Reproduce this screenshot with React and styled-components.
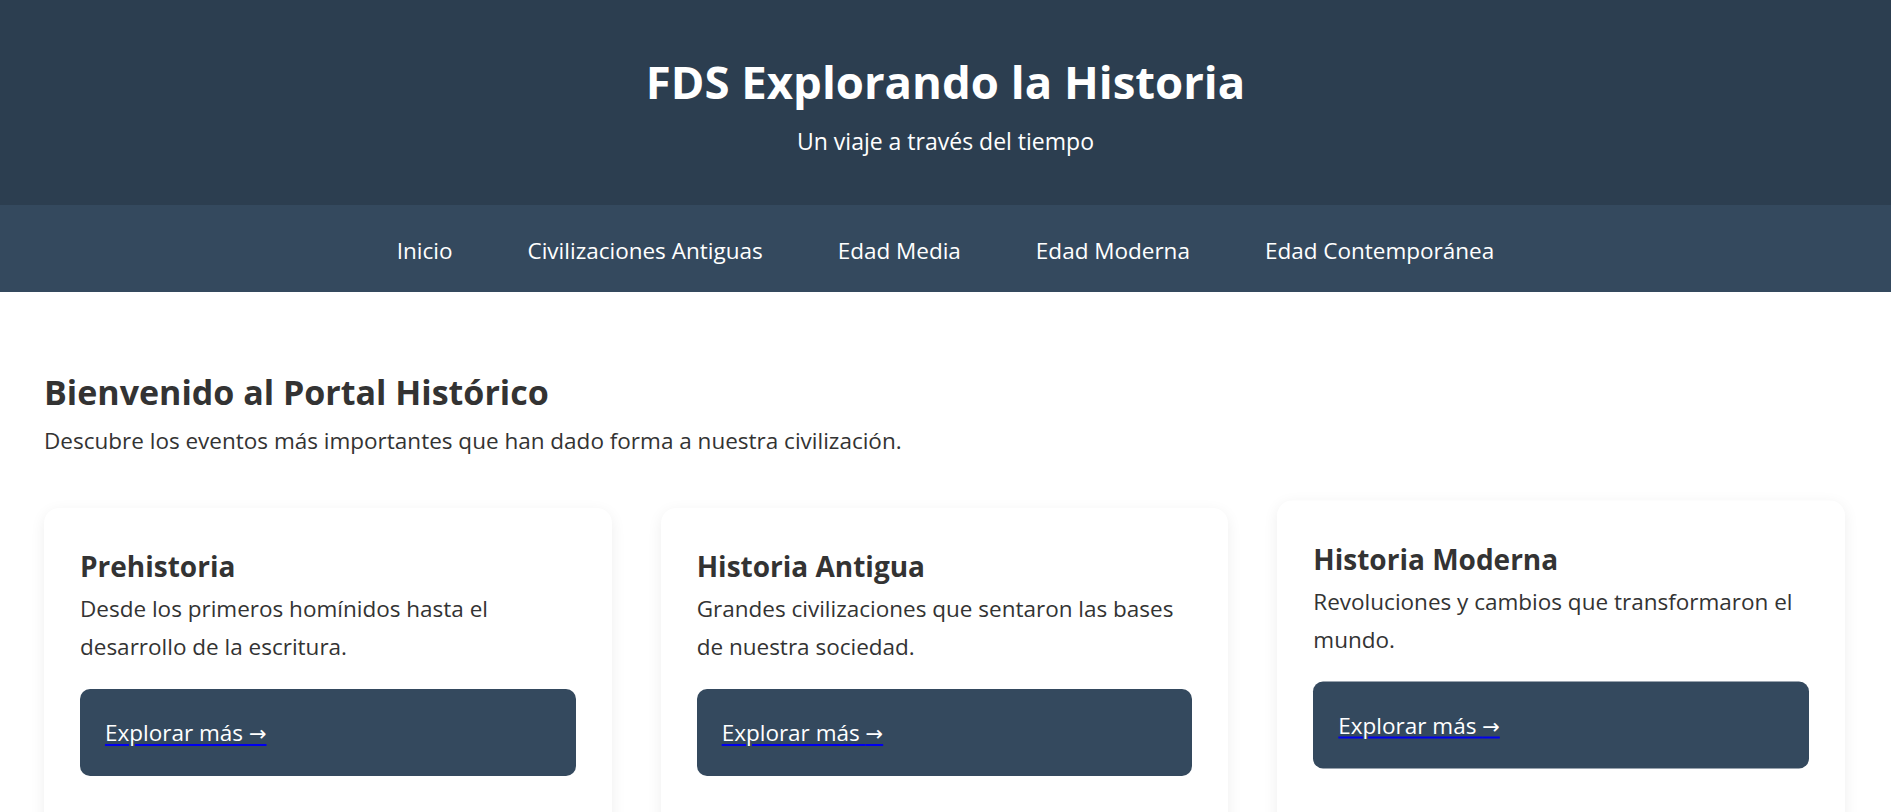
import styled, { createGlobalStyle } from "styled-components";

const GlobalStyle = createGlobalStyle`
  * {
    box-sizing: border-box;
  }
  body {
    margin: 0;
    background: #ffffff;
    font-family: "Open Sans", "Noto Sans", sans-serif;
    color: #333333;
  }
`;

const Header = styled.header`
  background-color: #2c3e50;
  color: #ffffff;
  text-align: center;
  padding: 54px 20px 0;
  height: 205px;
`;

const Title = styled.h1`
  margin: 0;
  font-size: 45.5px;
  font-weight: 700;
  line-height: 1.2;
`;

const Subtitle = styled.p`
  margin: 16px 0 0;
  font-size: 23px;
  line-height: 1.4;
`;

const Nav = styled.nav`
  background-color: #34495e;
  height: 87px;
  padding-top: 5px;
  display: flex;
  justify-content: center;
  align-items: center;
  gap: 75px;
`;

const NavLink = styled.a`
  color: #ffffff;
  text-decoration: none;
  font-size: 22.5px;
  line-height: 1.4;
`;

const Main = styled.main`
  padding: 80px 46px 40px 44px;
`;

const Heading = styled.h2`
  margin: 0;
  font-size: 34px;
  font-weight: 700;
  line-height: 1.2;
`;

const Intro = styled.p`
  margin: 10.5px 0 0;
  font-size: 22.5px;
  line-height: 1.6;
`;

const CardGrid = styled.div`
  display: grid;
  grid-template-columns: repeat(3, 1fr);
  gap: 49px;
  margin-top: 48.7px;
  align-items: start;
`;

const Card = styled.article`
  background: #ffffff;
  border-radius: 15px;
  padding: 38px 36px 60px;
  box-shadow: 0 4px 15px rgba(0, 0, 0, 0.07);
  transform: ${(props) => (props.raised ? "translateY(-7.5px)" : "none")};
`;

const CardTitle = styled.h3`
  margin: 0;
  font-size: 28px;
  font-weight: 700;
  line-height: 40.6px;
`;

const CardText = styled.p`
  margin: 3.6px 0 0;
  font-size: 22.5px;
  line-height: 37.5px;
`;

const ExploreButton = styled.div`
  margin-top: 23.8px;
  height: 87px;
  display: flex;
  align-items: center;
  padding: 0 25px;
  background-color: #34495e;
  border-radius: 10px;
`;

const ExploreLink = styled.a`
  color: #ffffff;
  font-size: 22.5px;
  text-decoration: underline;
  text-decoration-color: #0000ee;
  text-decoration-thickness: 2px;
  text-underline-offset: 3px;
  cursor: pointer;
`;

const Arrow = styled.span`
  font-family: "DejaVu Sans", sans-serif;
  font-size: 21px;
`;

const navItems = [
  "Inicio",
  "Civilizaciones Antiguas",
  "Edad Media",
  "Edad Moderna",
  "Edad Contemporánea",
];

const periods = [
  {
    id: 1,
    title: "Prehistoria",
    text: "Desde los primeros homínidos hasta el desarrollo de la escritura.",
  },
  {
    id: 2,
    title: "Historia Antigua",
    text: "Grandes civilizaciones que sentaron las bases de nuestra sociedad.",
  },
  {
    id: 3,
    title: "Historia Moderna",
    text: "Revoluciones y cambios que transformaron el mundo.",
    raised: true,
  },
];

const App = () => {
  return (
    <>
      <GlobalStyle />
      <Header>
        <Title>FDS Explorando la Historia</Title>
        <Subtitle>Un viaje a través del tiempo</Subtitle>
      </Header>
      <Nav>
        {navItems.map((item) => (
          <NavLink key={item} href="#">
            {item}
          </NavLink>
        ))}
      </Nav>
      <Main>
        <Heading>Bienvenido al Portal Histórico</Heading>
        <Intro>
          Descubre los eventos más importantes que han dado forma a nuestra
          civilización.
        </Intro>
        <CardGrid>
          {periods.map((period) => (
            <Card key={period.id} raised={period.raised}>
              <CardTitle>{period.title}</CardTitle>
              <CardText>{period.text}</CardText>
              <ExploreButton>
                <ExploreLink href="#">
                  Explorar más <Arrow>→</Arrow>
                </ExploreLink>
              </ExploreButton>
            </Card>
          ))}
        </CardGrid>
      </Main>
    </>
  );
};

export default App;
